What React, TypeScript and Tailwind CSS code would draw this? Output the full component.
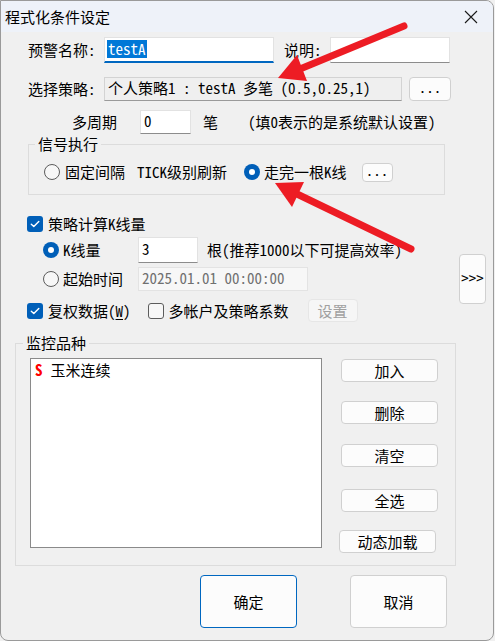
import React from "react";

const ui = "font-['Noto_Sans_Mono_CJK_SC','Noto_Sans_CJK_SC',monospace] text-[15px] leading-[18px] text-black";

function Radio({ checked }: { checked?: boolean }) {
  if (checked) {
    return (
      <span className="flex h-[16px] w-[16px] shrink-0 items-center justify-center rounded-full bg-[#005fb8]">
        <span className="block h-[6px] w-[6px] rounded-full bg-white" />
      </span>
    );
  }
  return <span className="block h-[16px] w-[16px] shrink-0 rounded-full border border-[#5c5c5c] bg-[#f7f7f7]" />;
}

function Check({ checked }: { checked?: boolean }) {
  if (checked) {
    return (
      <span className="flex h-[16px] w-[16px] shrink-0 items-center justify-center rounded-[3px] bg-[#005fb8]">
        <svg width="12" height="12" viewBox="0 0 12 12">
          <path d="M2.3 6.2 L4.8 8.6 L9.8 3.4" fill="none" stroke="white" strokeWidth="1.4" strokeLinecap="round" strokeLinejoin="round" />
        </svg>
      </span>
    );
  }
  return <span className="block h-[16px] w-[16px] shrink-0 rounded-[3px] border border-[#5c5c5c] bg-[#f7f7f7]" />;
}

function Btn({ children, className = "" }: { children: React.ReactNode; className?: string }) {
  return (
    <div className={"flex shrink-0 items-center justify-center rounded-[4px] border border-[#d0d0d0] bg-[#fcfcfc] " + className}>
      {children}
    </div>
  );
}

function Field({ children, className = "" }: { children?: React.ReactNode; className?: string }) {
  return (
    <div className={"flex shrink-0 items-center border border-[#e2e2e2] border-b-[#8c8c8c] bg-white pb-[3px] pl-[3px] " + className}>
      {children}
    </div>
  );
}

function Arrows() {
  return (
    <svg className="pointer-events-none absolute left-0 top-0" width="495" height="641" viewBox="0 0 495 641">
      <line x1="404" y1="26" x2="300" y2="69" stroke="#ed1c24" strokeWidth="7" strokeLinecap="round" />
      <polygon points="278,78 307,81 297,55" fill="#ed1c24" />
      <line x1="411" y1="249" x2="297" y2="194" stroke="#ed1c24" strokeWidth="7" strokeLinecap="round" />
      <polygon points="275,183 304,182 292,207" fill="#ed1c24" />
    </svg>
  );
}

export default function App() {
  return (
    <div className={"relative h-[641px] w-[495px] overflow-hidden bg-[#f0f0f0] " + ui}>
      <div className="flex h-[641px] w-[494px] flex-col overflow-hidden rounded-tr-[8px] rounded-b-[8px] border border-[#9a9a9a] bg-[#f0f0f0]">
        {/* title bar */}
        <div className="flex h-[31px] shrink-0 items-center justify-between bg-[#eef2f9] pl-[4px] pr-[15px] font-['Noto_Sans_CJK_SC',sans-serif]">
          <span className="pt-[1px]">程式化条件设定</span>
          <svg width="14" height="14" viewBox="0 0 14 14">
            <path d="M1 1 L13 13 M13 1 L1 13" stroke="#1a1a1a" strokeWidth="1.1" />
          </svg>
        </div>

        {/* name row */}
        <div className="ml-[27px] mt-[5px] flex h-[26px] items-center">
          <span className="w-[76px] shrink-0">预警名称:</span>
          <div className="flex h-[26px] w-[170px] shrink-0 items-center border border-[#e2e2e2] border-b-2 border-b-[#0067c0] bg-white pb-[2px] pl-[2px]">
            <span className="bg-[#0078d7] px-[1px] text-white">testA</span>
          </div>
          <span className="ml-[10px] w-[46px] shrink-0">说明:</span>
          <Field className="h-[26px] w-[120px]" />
        </div>

        {/* strategy row */}
        <div className="ml-[27px] mt-[14px] flex h-[24px] items-center">
          <span className="w-[76px] shrink-0">选择策略:</span>
          <div className="flex h-[24px] w-[298px] shrink-0 items-center border border-[#d3d3d3] border-b-[#9a9a9a] bg-[#efefef] pb-[2px] pl-[3px]">
            个人策略1 : testA 多笔 (0.5,0.25,1)
          </div>
          <Btn className="ml-[7px] h-[24px] w-[42px] pb-[4px]">...</Btn>
        </div>

        {/* period row */}
        <div className="ml-[71px] mt-[9px] flex h-[24px] items-center">
          <span className="w-[68px] shrink-0">多周期</span>
          <Field className="h-[24px] w-[51px]">0</Field>
          <span className="ml-[12px]">笔</span>
          <span className="ml-[30px]">(填0表示的是系统默认设置)</span>
        </div>

        {/* signal group */}
        <div className="relative ml-[27px] mt-[10px] h-[51px] w-[417px] shrink-0 border border-[#dcdcdc]">
          <span className="absolute left-[6px] top-[-10px] bg-[#f0f0f0] px-[3px]">信号执行</span>
          <div className="ml-[15px] mt-[17px] flex h-[20px] items-center">
            <Radio />
            <span className="ml-[5px]">固定间隔</span>
            <span className="ml-[12px]">TICK级别刷新</span>
            <span className="ml-[17px] flex"><Radio checked /></span>
            <span className="ml-[4px]">走完一根K线</span>
            <Btn className="ml-[15px] h-[19px] w-[31px] pb-[4px]">...</Btn>
          </div>
        </div>

        {/* k-line settings */}
        <div className="ml-[26px] mt-[19px] flex">
          <div className="flex w-[420px] shrink-0 flex-col">
            <div className="flex h-[20px] items-center">
              <Check checked />
              <span className="ml-[5px]">策略计算K线量</span>
            </div>
            <div className="ml-[16px] mt-[3px] flex h-[26px] items-center">
              <Radio checked />
              <span className="w-[79px] shrink-0 pl-[4px]">K线量</span>
              <Field className="h-[26px] w-[60px]">3</Field>
              <span className="ml-[9px] whitespace-nowrap">根(推荐1000以下可提高效率)</span>
            </div>
            <div className="ml-[16px] mt-[4px] flex h-[24px] items-center">
              <Radio />
              <span className="w-[79px] shrink-0 pl-[4px]">起始时间</span>
              <div className="flex h-[24px] w-[170px] shrink-0 items-center border border-[#e3e3e3] bg-[#f7f7f7] pb-[2px] pl-[3px] text-[#707070]">
                2025.01.01 00:00:00
              </div>
            </div>
            <div className="mt-[8px] flex h-[23px] items-center">
              <Check checked />
              <span className="ml-[5px]">
                复权数据(<span className="underline underline-offset-2">W</span>)
              </span>
              <span className="ml-[17px] flex"><Check /></span>
              <span className="ml-[5px]">多帐户及策略系数</span>
              <div className="ml-[19px] flex h-[23px] w-[50px] shrink-0 items-center justify-center rounded-[4px] border border-[#e6e6e6] bg-[#f6f6f6] text-[#a0a0a0]">
                设置
              </div>
            </div>
          </div>
          <Btn className="ml-[12px] mt-[40px] h-[50px] w-[27px] pb-[2px]">&gt;&gt;&gt;</Btn>
        </div>

        {/* monitored symbols */}
        <div className="relative ml-[14px] mt-[21px] flex h-[223px] w-[441px] shrink-0 border border-[#dcdcdc]">
          <span className="absolute left-[7px] top-[-10px] bg-[#f0f0f0] px-[3px]">监控品种</span>
          <div className="ml-[14px] mt-[14px] h-[190px] w-[292px] shrink-0 border border-[#8a8a8a] bg-white">
            <div className="mt-[2px] flex items-center pl-[4px]">
              <span className="font-bold text-[#ff0000]">S</span>
              <span className="ml-[8px]">玉米连续</span>
            </div>
          </div>
          <div className="ml-[19px] mt-[15px] flex flex-col">
            <Btn className="h-[23px] w-[97px]">加入</Btn>
            <Btn className="mt-[19px] h-[23px] w-[97px]">删除</Btn>
            <Btn className="mt-[20px] h-[23px] w-[97px]">清空</Btn>
            <Btn className="mt-[22px] h-[23px] w-[97px]">全选</Btn>
            <Btn className="-ml-[2px] mt-[18px] h-[23px] w-[97px]">动态加载</Btn>
          </div>
        </div>

        {/* dialog buttons */}
        <div className="ml-[199px] mt-[9px] flex">
          <div className="flex h-[53px] w-[97px] items-center justify-center rounded-[4px] border border-[#0067c0] bg-[#fcfcfc]">
            确定
          </div>
          <Btn className="ml-[53px] h-[53px] w-[97px]">取消</Btn>
        </div>
      </div>
      <Arrows />
    </div>
  );
}
